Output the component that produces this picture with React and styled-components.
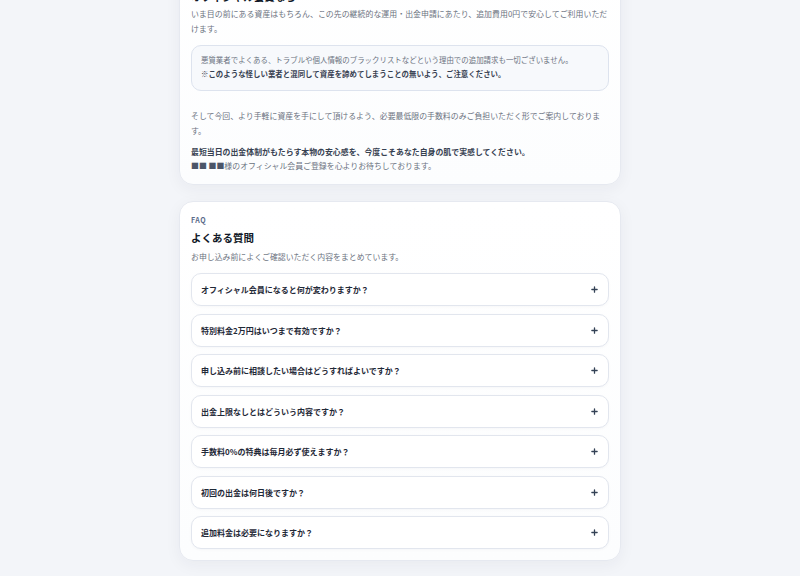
import React from "react";
import styled, { createGlobalStyle } from "styled-components";

const GlobalStyle = createGlobalStyle`
  html, body {
    margin: 0;
    padding: 0;
    overflow: hidden;
    background: #f3f5f9;
  }
  body {
    font-family: "Noto Sans CJK JP", "Noto Sans", sans-serif;
    color: #1f2937;
  }
`;

const Page = styled.main`
  width: 442px;
  margin: -40px auto 0;
  display: flex;
  flex-direction: column;
  gap: 16px;
  padding-bottom: 16px;
`;

const Card = styled.section`
  background: linear-gradient(180deg, #ffffff 0%, #fcfdfe 100%);
  border: 1px solid #e6e9f0;
  border-radius: 14px;
  padding: 11px;
  box-shadow: 0 4px 16px rgba(30, 41, 59, 0.05);
`;

const Label = styled.div`
  font-size: 7px;
  line-height: 14px;
  font-weight: 700;
  letter-spacing: 0.08em;
  color: #5b6b8a;
`;

const Heading = styled.h2`
  margin: 3px 0 0;
  font-size: 10.5px;
  line-height: 16px;
  font-weight: 700;
  color: #111827;
`;

const Text = styled.p`
  margin: ${(p) => p.$mt || 0}px 0 0;
  font-size: 7.9px;
  line-height: 15px;
  letter-spacing: ${(p) => p.$ls || 0}px;
  color: #6b7280;
`;

const Strong = styled.strong`
  font-weight: 700;
  color: #374151;
`;

const Closing = styled.p`
  margin: 7px 0 0;
  font-size: 7.9px;
  line-height: 14px;
  color: #6b7280;
`;

const Blocks = styled.span`
  color: #4b5568;
`;

const Notice = styled.div`
  margin-top: 9px;
  margin-bottom: 17px;
  padding: 7px 9px 9px;
  background: #f7f9fc;
  border: 1px solid #dde3ee;
  border-radius: 10px;
  font-size: 7.45px;
  line-height: 14px;
  color: #6b7280;
`;

const List = styled.div`
  margin-top: 9px;
  display: flex;
  flex-direction: column;
  gap: 7.5px;
`;

const Item = styled.button`
  all: unset;
  box-sizing: border-box;
  height: 33px;
  padding: 0 10px 0 9px;
  display: flex;
  align-items: center;
  justify-content: space-between;
  background: #ffffff;
  border: 1px solid #e2e6ee;
  border-radius: 10px;
  box-shadow: 0 1px 3px rgba(30, 41, 59, 0.03);
  font-family: "Noto Sans CJK JP", "Noto Sans", sans-serif;
  font-size: 8px;
  font-weight: 700;
  color: #1f2937;
  cursor: pointer;
`;

const Plus = () => (
  <svg width="7" height="7" viewBox="0 0 8 8" aria-hidden="true">
    <path d="M4 1v6M1 4h6" stroke="#334155" strokeWidth="1.5" strokeLinecap="round" />
  </svg>
);

const faqs = [
  "オフィシャル会員になると何が変わりますか？",
  "特別料金2万円はいつまで有効ですか？",
  "申し込み前に相談したい場合はどうすればよいですか？",
  "出金上限なしとはどういう内容ですか？",
  "手数料0%の特典は毎月必ず使えますか？",
  "初回の出金は何日後ですか？",
  "追加料金は必要になりますか？",
];

export default function App() {
  return (
    <>
      <GlobalStyle />
      <Page>
        <Card>
          <Label>MEMBERSHIP</Label>
          <Heading>オフィシャル会員なら</Heading>
          <Text $mt={1} $ls={0.04}>
            いま目の前にある資産はもちろん、この先の継続的な運用・出金申請にあたり、追加費用0円で安心してご利用いただけます。
          </Text>
          <Notice>
            悪質業者でよくある、トラブルや個人情報のブラックリストなどという理由での追加請求も一切ございません。
            <br />
            <Strong>※このような怪しい業者と混同して資産を諦めてしまうことの無いよう、ご注意ください。</Strong>
          </Notice>
          <Text>
            そして今回、より手軽に資産を手にして頂けるよう、必要最低限の手数料のみご負担いただく形でご案内しております。
          </Text>
          <Closing>
            <Strong>最短当日の出金体制がもたらす本物の安心感を、今度こそあなた自身の肌で実感してください。</Strong>
            <br />
            <Blocks>■■ ■■</Blocks>様のオフィシャル会員ご登録を心よりお待ちしております。
          </Closing>
        </Card>
        <Card>
          <Label>FAQ</Label>
          <Heading>よくある質問</Heading>
          <Text $mt={3}>お申し込み前によくご確認いただく内容をまとめています。</Text>
          <List>
            {faqs.map((q) => (
              <Item key={q} type="button">
                <span>{q}</span>
                <Plus />
              </Item>
            ))}
          </List>
        </Card>
      </Page>
    </>
  );
}
